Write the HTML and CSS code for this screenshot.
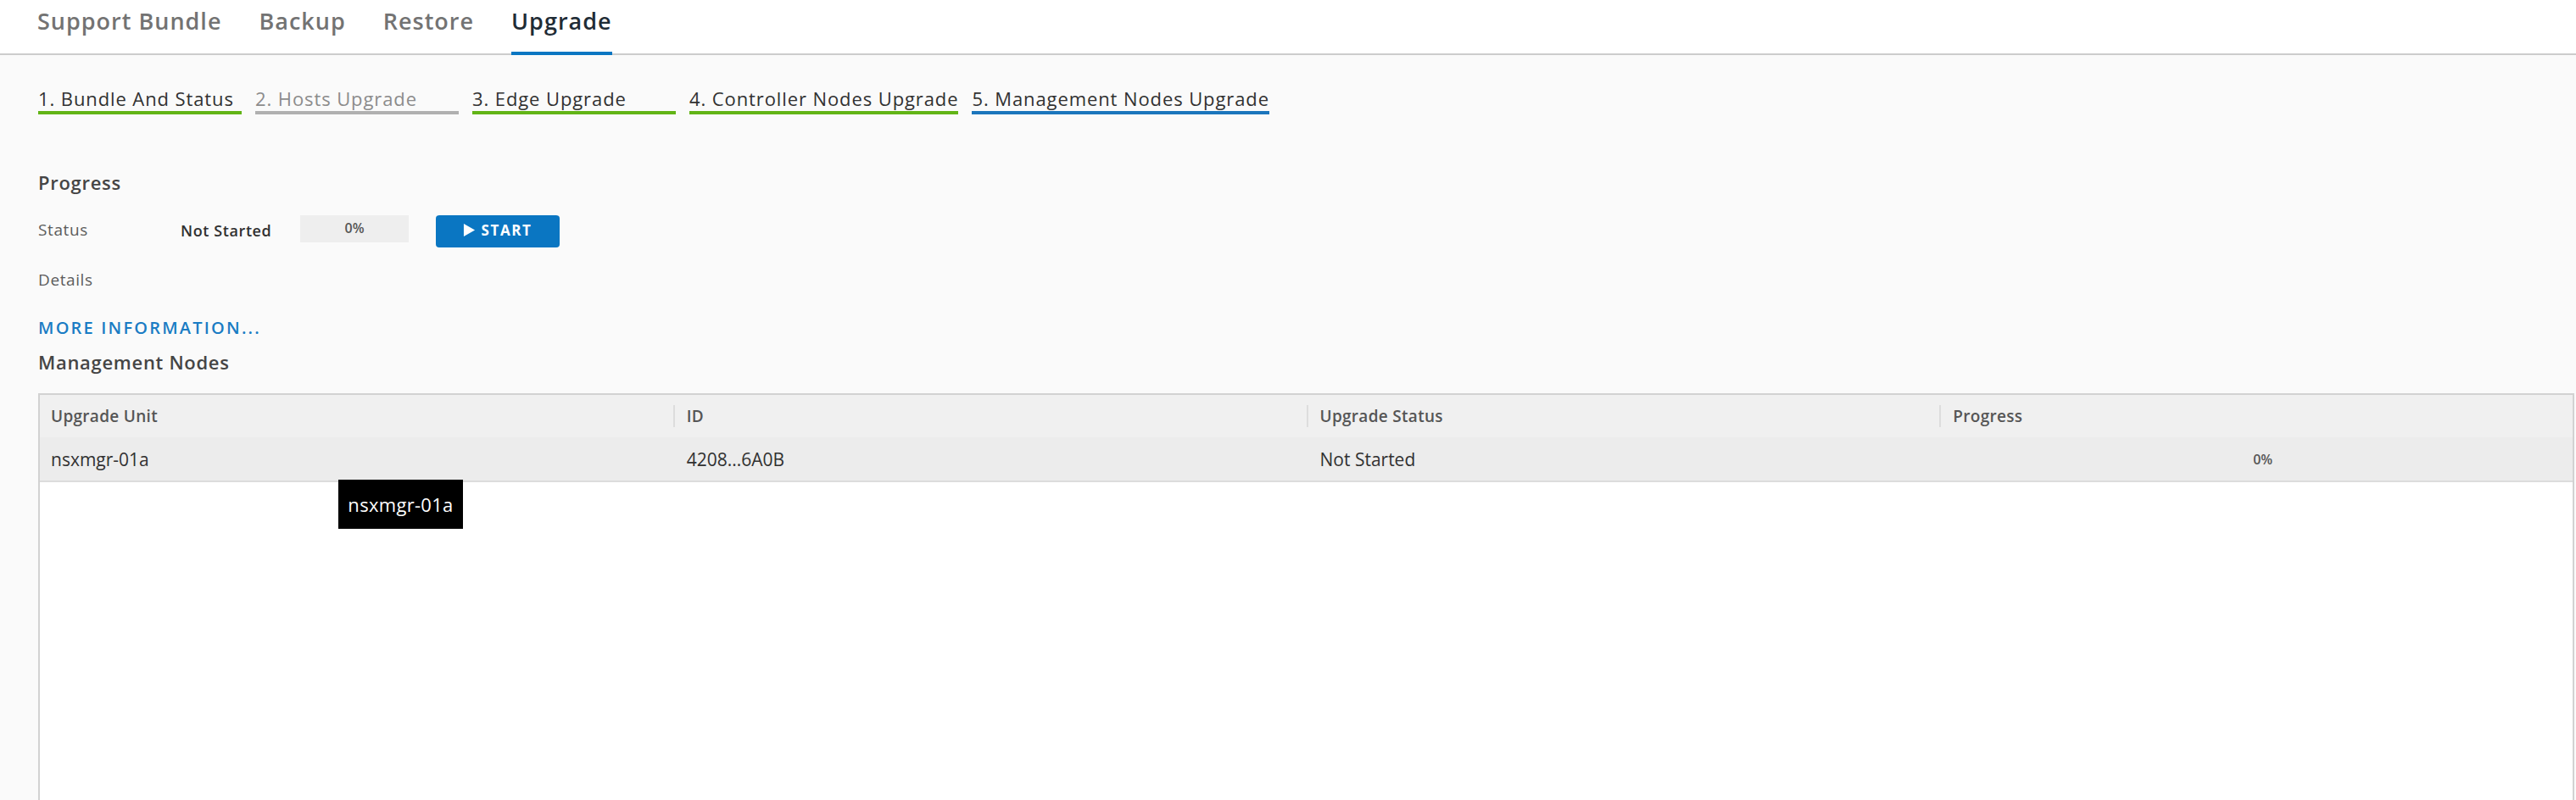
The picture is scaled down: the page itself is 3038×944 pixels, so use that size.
FILE: index.html
```html
<!DOCTYPE html>
<html>

<head>
  <title>Upgrade</title>
  <link rel="stylesheet" href="styles.css">
</head>

<body>
  <div class="page">
    <nav class="top-tabs">
      <a class="top-tab">Support Bundle</a>
      <a class="top-tab">Backup</a>
      <a class="top-tab">Restore</a>
      <a class="top-tab active">Upgrade</a>
    </nav>

    <div class="content">
      <div class="steps">
        <div class="step done">1. Bundle And Status</div>
        <div class="step skipped">2. Hosts Upgrade</div>
        <div class="step done">3. Edge Upgrade</div>
        <div class="step done">4. Controller Nodes Upgrade</div>
        <div class="step current">5. Management Nodes Upgrade</div>
      </div>

      <h3 class="section-title progress-title">Progress</h3>
      <div class="status-row">
        <span class="field-label">Status</span>
        <span class="status-value">Not Started</span>
        <div class="progress-box">0%</div>
        <button class="btn-start">
          <svg class="play-icon" viewBox="0 0 16 18" width="15" height="17">
            <polygon points="1,1 15,9 1,17" fill="#fff" />
          </svg>
          START
        </button>
      </div>
      <div class="field-label details-label">Details</div>
      <a class="more-info">MORE INFORMATION...</a>

      <h3 class="section-title nodes-title">Management Nodes</h3>

      <div class="datagrid">
        <div class="dg-row dg-head">
          <div class="dg-cell">Upgrade Unit</div>
          <div class="dg-cell">ID</div>
          <div class="dg-cell">Upgrade Status</div>
          <div class="dg-cell">Progress</div>
        </div>
        <div class="dg-row dg-item">
          <div class="dg-cell">nsxmgr-01a</div>
          <div class="dg-cell">4208...6A0B</div>
          <div class="dg-cell">Not Started</div>
          <div class="dg-cell dg-progress">0%</div>
        </div>
        <div class="dg-tooltip">nsxmgr-01a</div>
      </div>
    </div>
  </div>
</body>

</html>
```

FILE: styles.css
```css
html,
body {
  margin: 0;
  padding: 0;
  height: 100%;
}

body {
  background-color: #fafafa;
  font-family: "Open Sans", "Liberation Sans", sans-serif;
  color: #565656;
  overflow: hidden;
}

.page {
  height: 100vh;
  display: flex;
  flex-direction: column;
}

/* top navigation */
.top-tabs {
  display: flex;
  gap: 44px;
  height: 65px;
  box-sizing: border-box;
  padding-left: 44px;
  background-color: #fff;
  border-bottom: 2px solid #cccccc;
  flex-shrink: 0;
}

.top-tab {
  box-sizing: border-box;
  height: 65px;
  margin-bottom: -2px;
  padding-top: 8px;
  font-size: 27px;
  line-height: 34px;
  font-weight: 600;
  letter-spacing: 1px;
  color: #737373;
  border-bottom: 4px solid transparent;
}

.top-tab.active {
  color: #1f2c36;
  border-bottom-color: #0a76c2;
}

.content {
  flex: 1;
  display: flex;
  flex-direction: column;
  padding: 0 2px 0 45px;
  min-height: 0;
}

/* wizard steps */
.steps {
  display: flex;
  gap: 16px;
  margin-top: 37px;
}

.step {
  min-width: 240px;
  font-size: 22px;
  line-height: 28px;
  letter-spacing: 0.9px;
  padding-bottom: 1px;
  border-bottom: 4px solid #62b416;
  color: #313131;
}

.step.skipped {
  color: #8c8c8c;
  border-bottom-color: #b0b0b0;
}

.step.current {
  border-bottom-color: #1b75bc;
}

.section-title {
  margin: 0;
  font-size: 22px;
  line-height: 28px;
  font-weight: 600;
  letter-spacing: 0.7px;
  color: #454545;
}

.progress-title {
  margin-top: 66px;
}

/* status */
.status-row {
  display: flex;
  align-items: flex-start;
  margin-top: 25px;
}

.field-label {
  font-size: 19px;
  line-height: 34px;
  letter-spacing: 0.6px;
  color: #5c5c5c;
}

.status-row .field-label {
  width: 168px;
}

.status-value {
  width: 141px;
  font-size: 18px;
  line-height: 36px;
  font-weight: 600;
  letter-spacing: 0.6px;
  color: #313131;
}

.progress-box {
  width: 128px;
  height: 32px;
  line-height: 30px;
  background-color: #eeeeee;
  text-align: center;
  font-size: 16px;
  font-weight: 600;
  color: #565656;
}

.btn-start {
  margin-left: 32px;
  width: 146px;
  height: 38px;
  display: flex;
  align-items: center;
  justify-content: center;
  gap: 6px;
  padding: 0 0 4px 0;
  border: none;
  border-radius: 4px;
  background-color: #0a76c2;
  color: #fff;
  font-family: "Open Sans", "Liberation Sans", sans-serif;
  font-size: 17px;
  font-weight: 700;
  letter-spacing: 1.6px;
  cursor: pointer;
}

.play-icon {
  display: block;
}

.details-label {
  margin-top: 24px;
  line-height: 28px;
}

.more-info {
  margin-top: 29px;
  font-size: 20px;
  line-height: 28px;
  font-weight: 600;
  letter-spacing: 2.2px;
  color: #1a7cc4;
  cursor: pointer;
}

.nodes-title {
  margin-top: 12px;
}

/* datagrid */
.datagrid {
  position: relative;
  margin-top: 23px;
  flex: 1;
  min-height: 600px;
  background-color: #fff;
  border: 2px solid #d2d2d2;
  border-bottom: none;
}

.dg-row {
  display: grid;
  grid-template-columns: repeat(4, 1fr);
}

.dg-head {
  height: 50px;
  background-color: #f0f0f0;
}

.dg-item {
  height: 51px;
  background-color: #ececec;
  border-bottom: 2px solid #dcdcdc;
}

.dg-cell {
  position: relative;
  display: flex;
  align-items: center;
  padding-left: 13px;
  font-size: 21px;
  color: #313131;
}

.dg-head .dg-cell {
  font-size: 19px;
  font-weight: 600;
  letter-spacing: 0.3px;
  color: #565656;
}

.dg-head .dg-cell + .dg-cell::before {
  content: "";
  position: absolute;
  left: 0;
  top: 12px;
  bottom: 12px;
  width: 2px;
  background-color: #dddddd;
}

.dg-row .dg-cell + .dg-cell {
  padding-left: 16px;
}

.dg-cell.dg-progress {
  justify-content: center;
  padding-left: 0;
  font-size: 16px;
  font-weight: 600;
  color: #565656;
}

.dg-tooltip {
  position: absolute;
  left: 352px;
  top: 100px;
  width: 147px;
  height: 58px;
  display: flex;
  align-items: center;
  justify-content: center;
  background-color: #000;
  color: #fff;
  font-size: 22px;
  letter-spacing: 0.3px;
}
```
